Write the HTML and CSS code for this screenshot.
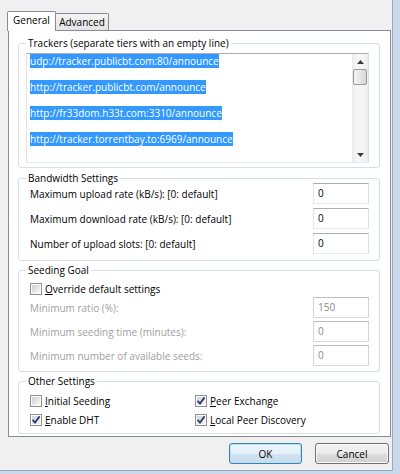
FILE: index.html
```html
<!DOCTYPE html>
<html>
<head>
<meta charset="utf-8">
<title>Torrent Properties</title>
<link rel="stylesheet" href="styles.css">
</head>
<body>
<div class="window">
  <div class="tabs">
    <div class="tab active">General</div>
    <div class="tab">Advanced</div>
  </div>
  <div class="panel">
    <div class="group g-trackers">
      <div class="group-title">Trackers (separate tiers with an empty line)</div>
      <div class="textarea">
        <div class="lines">
          <div class="line"><span class="sel">udp://tracker.publicbt.com:80/announce</span></div>
          <div class="line"></div>
          <div class="line"><span class="sel">http://tracker.publicbt.com/announce</span></div>
          <div class="line"></div>
          <div class="line"><span class="sel">http://fr33dom.h33t.com:3310/announce</span></div>
          <div class="line"></div>
          <div class="line"><span class="sel">http://tracker.torrentbay.to:6969/announce</span></div>
        </div>
        <div class="scrollbar">
          <div class="sb-btn"><svg width="7" height="4" viewBox="0 0 7 4"><path d="M0 4 L3.5 0 L7 4 Z" fill="#3c3c3c"/></svg></div>
          <div class="sb-thumb"></div>
          <div class="sb-track"></div>
          <div class="sb-btn"><svg width="7" height="4" viewBox="0 0 7 4"><path d="M0 0 L3.5 4 L7 0 Z" fill="#3c3c3c"/></svg></div>
        </div>
      </div>
    </div>

    <div class="group g-bandwidth">
      <div class="group-title">Bandwidth Settings</div>
      <div class="rows rows-bw">
        <div class="row"><span>Maximum upload rate (kB/s): [0: default]</span><div class="input">0</div></div>
        <div class="row"><span>Maximum download rate (kB/s): [0: default]</span><div class="input">0</div></div>
        <div class="row"><span>Number of upload slots: [0: default]</span><div class="input">0</div></div>
      </div>
    </div>

    <div class="group g-seeding">
      <div class="group-title">Seeding Goal</div>
      <div class="check-row"><span class="cb"></span><span><u>O</u>verride default settings</span></div>
      <div class="rows rows-seed">
        <div class="row disabled"><span>Minimum ratio (%):</span><div class="input">150</div></div>
        <div class="row disabled"><span>Minimum seeding time (minutes):</span><div class="input">0</div></div>
        <div class="row disabled"><span>Minimum number of available seeds:</span><div class="input">0</div></div>
      </div>
    </div>

    <div class="group g-other">
      <div class="group-title">Other Settings</div>
      <div class="check-grid">
        <div class="check-row"><span class="cb"></span><span><u>I</u>nitial Seeding</span></div>
        <div class="check-row"><span class="cb checked"><svg width="10" height="10" viewBox="0 0 10 10"><path d="M1.6 4.8 L4 7.6 L8.6 1.4" fill="none" stroke="#2d3e6c" stroke-width="1.8"/></svg></span><span><u>P</u>eer Exchange</span></div>
        <div class="check-row"><span class="cb checked"><svg width="10" height="10" viewBox="0 0 10 10"><path d="M1.6 4.8 L4 7.6 L8.6 1.4" fill="none" stroke="#2d3e6c" stroke-width="1.8"/></svg></span><span><u>E</u>nable DHT</span></div>
        <div class="check-row"><span class="cb checked"><svg width="10" height="10" viewBox="0 0 10 10"><path d="M1.6 4.8 L4 7.6 L8.6 1.4" fill="none" stroke="#2d3e6c" stroke-width="1.8"/></svg></span><span><u>L</u>ocal Peer Discovery</span></div>
      </div>
    </div>
  </div>
  <div class="buttons">
    <button class="btn btn-default">OK</button>
    <button class="btn">Cancel</button>
  </div>
</div>
</body>
</html>
```
FILE: styles.css
```css
* { box-sizing: border-box; }
html, body { margin: 0; padding: 0; }
body {
  background: #f0f0f0;
  font-family: "Open Sans", "Noto Sans", sans-serif;
  font-size: 10px;
  color: #000;
}
.window {
  width: 400px;
  height: 474px;
  display: flex;
  flex-direction: column;
  overflow: hidden;
  background: #f0f0f0;
  box-shadow: inset -7px -3px 0 #c9d8ea, inset -8px -4px 0 #9aabbf;
}

/* tabs */
.tabs {
  display: flex;
  align-items: flex-end;
  height: 20px;
  margin: 11px 0 -1px 7px;
  position: relative;
  z-index: 1;
}
.tab {
  height: 17px;
  margin-bottom: 1px;
  width: 53px;
  border: 1px solid #898c95;
  border-bottom: none;
  border-left: none;
  border-radius: 0 2px 0 0;
  background: linear-gradient(#f4f4f4, #e4e4e4);
  display: flex;
  align-items: center;
  justify-content: center;
  padding-bottom: 1px;
}
.tab.active {
  height: 20px;
  width: 49px;
  margin-bottom: 0;
  border-left: 1px solid #898c95;
  border-radius: 2px 2px 0 0;
  background: #fff;
  padding-bottom: 3px;
}

/* panel */
.panel {
  margin-left: 8px;
  width: 383px;
  height: 407px;
  background: #fff;
  border: 1px solid #898c95;
  padding: 12px 10px 0 9px;
}
.group {
  border: 1px solid #d5dfe5;
  border-radius: 3px;
  padding: 0 10px 0 7px;
}
.group-title {
  margin-top: -8px;
  height: 14px;
  line-height: 14px;
  padding: 0 2px;
  background: #fff;
  width: max-content;
}
.g-trackers { padding-bottom: 4px; }
.g-bandwidth { margin-top: 10px; padding-bottom: 6px; }
.g-seeding { margin-top: 9px; padding-bottom: 5px; }
.g-other { margin-top: 9px; padding-bottom: 5px; }

/* trackers textarea */
.textarea {
  margin-top: 3px;
  height: 110px;
  display: flex;
  border: 1px solid;
  border-color: #abadb3 #dbdfe6 #e3e9ef #e2e3ea;
  background: #fff;
}
.lines {
  flex: 1;
  padding: 1px 3px;
  overflow: hidden;
}
.line {
  height: 13px;
  line-height: 13px;
  white-space: nowrap;
}
.sel {
  background: #3399ff;
  color: #fff;
}
.scrollbar {
  width: 16px;
  display: flex;
  flex-direction: column;
  background: linear-gradient(90deg, #e9e9e9, #f5f5f5 25%, #f5f5f5 75%, #ececec);
}
.sb-btn {
  height: 15px;
  display: flex;
  align-items: center;
  justify-content: center;
}
.sb-thumb {
  height: 16px;
  margin: 0 1px;
  border: 1px solid #999;
  border-radius: 2px;
  background: linear-gradient(90deg, #f4f4f4, #e6e6e6 50%, #d6d6d6);
}
.sb-track { flex: 1; }

/* rows */
.rows {
  display: flex;
  flex-direction: column;
}
.rows-bw { margin-top: -2px; gap: 4px; }
.rows-seed { gap: 3px; }
.row {
  height: 21px;
  display: flex;
  align-items: center;
  justify-content: space-between;
  padding-left: 4px;
}
.input {
  width: 56px;
  height: 21px;
  border: 1px solid;
  border-color: #abadb3 #dbdfe6 #e3e9ef #e2e3ea;
  background: #fff;
  padding: 0 4px;
  line-height: 19px;
}
.row.disabled { color: #a0a0a0; }
.row.disabled .input {
  color: #8a8a8a;
  border-color: #bcbcbc #d4d4d4 #d9d9d9 #d4d4d4;
}

/* checkboxes */
.check-row {
  height: 16px;
  display: flex;
  align-items: center;
  gap: 3px;
  padding-left: 4px;
}
.g-seeding .check-row { margin-top: 4px; }
.cb {
  width: 12px;
  height: 12px;
  flex: none;
  border: 1px solid #8e8f8f;
  padding: 1px;
  background: linear-gradient(135deg, #cdd1d7, #f7f7f7) content-box no-repeat, #fff;
}
.cb svg {
  display: block;
  margin: -1px;
}
.check-grid {
  margin-top: 5px;
  display: grid;
  grid-template-columns: 169px 1fr;
  row-gap: 3px;
}
.check-grid .check-row:nth-child(even) { padding-left: 0; }

/* buttons */
.buttons {
  display: flex;
  justify-content: flex-end;
  gap: 13px;
  margin-top: 6px;
  padding-right: 11px;
}
.btn {
  width: 74px;
  height: 21px;
  font: inherit;
  color: #000;
  border: 1px solid #707070;
  border-radius: 3px;
  box-shadow: inset 0 0 0 1px #fcfcfc;
  background: linear-gradient(#f2f2f2, #ebebeb 50%, #dddddd 50%, #cfcfcf);
  padding: 0;
}
.btn-default {
  width: 73px;
  border-color: #3c7fb1;
  box-shadow: inset 0 0 0 1px #b6e4f6;
  background: linear-gradient(#eef7fc, #e3eff8 50%, #d3e4f1 50%, #c6dbec);
}
```
